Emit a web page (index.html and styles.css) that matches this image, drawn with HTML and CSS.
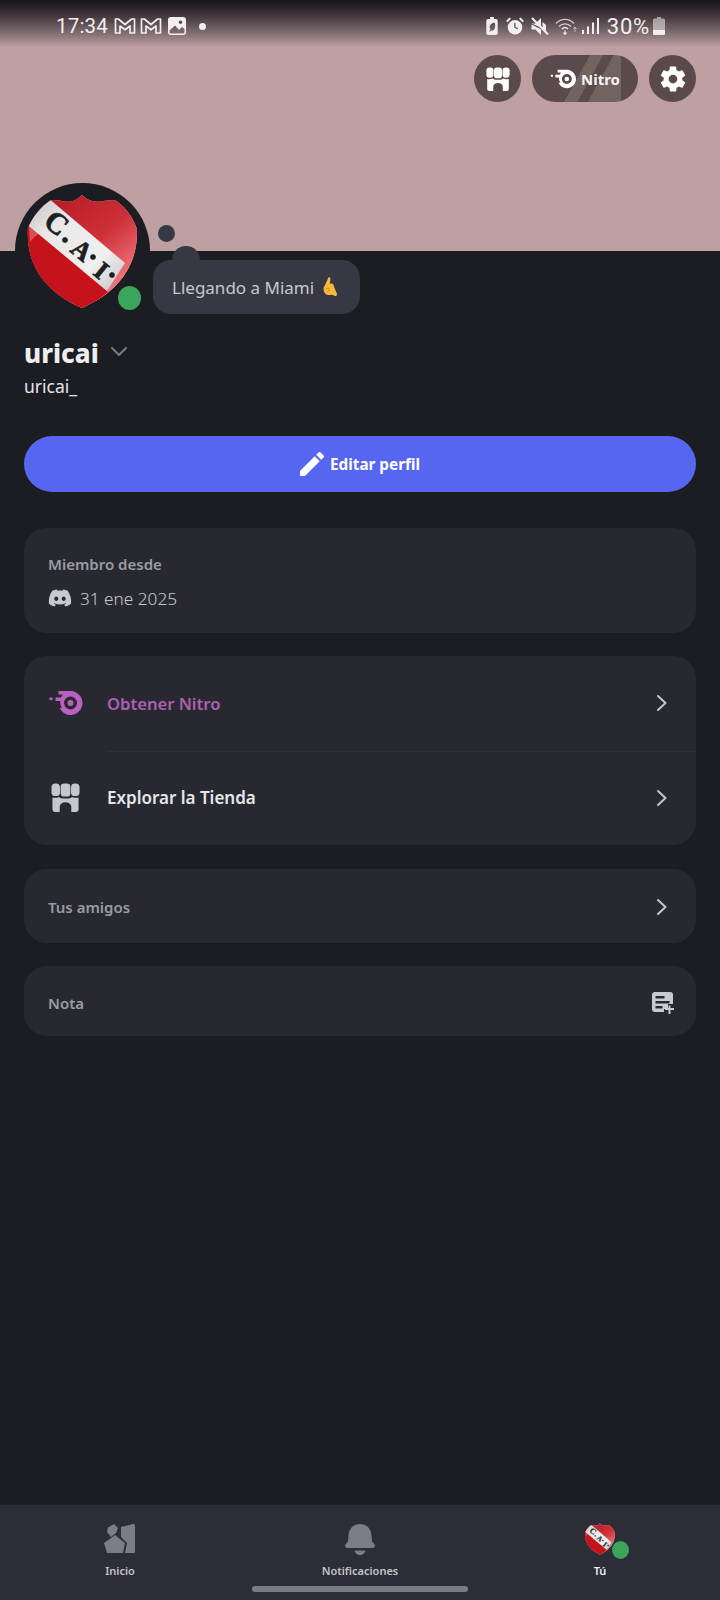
FILE: index.html
```html
<!DOCTYPE html>
<html lang="es">
<head>
<meta charset="utf-8">
<title>uricai</title>
<link rel="stylesheet" href="styles.css">
</head>
<body>
<svg class="sprite" width="0" height="0" aria-hidden="true">
  <defs>
    <linearGradient id="redTop" x1="0.1" y1="0" x2="0.9" y2="1">
      <stop offset="0" stop-color="#b01720"/><stop offset="0.5" stop-color="#cf2f38"/><stop offset="0.8" stop-color="#ec7076"/><stop offset="1" stop-color="#f58a90"/>
    </linearGradient>
    <linearGradient id="band" x1="0" y1="0" x2="1" y2="1">
      <stop offset="0" stop-color="#bcbcbc"/><stop offset="0.3" stop-color="#e8e8e8"/><stop offset="0.7" stop-color="#f0f0f0"/><stop offset="1" stop-color="#c2c2c2"/>
    </linearGradient>
    <clipPath id="shieldClip">
      <path d="M82 195c3 3 6 5 10 6 7 2 14-1 21-1 2 0 4 1 6 3 8 6 14 15 18 26 1 30-12 60-55 79-43-19-56-49-54-80 5-11 11-19 19-25 2-2 4-3 6-3 7 0 14 3 20 1 3-1 6-3 9-6z"/>
    </clipPath>
    <symbol id="shield" viewBox="26 193 113 117">
      <path d="M82 195c3 3 6 5 10 6 7 2 14-1 21-1 2 0 4 1 6 3 8 6 14 15 18 26 1 30-12 60-55 79-43-19-56-49-54-80 5-11 11-19 19-25 2-2 4-3 6-3 7 0 14 3 20 1 3-1 6-3 9-6z" fill="#e9b9b9"/>
      <g clip-path="url(#shieldClip)">
        <rect x="26" y="193" width="113" height="117" fill="url(#redTop)"/>
        <path d="M26 224 108 292 82 312 30 312 20 240z" fill="#c6131b"/>
        <path d="M29 226 47 219 58 228C44 230 36 234 30 242z" fill="#dc4d55"/>
        <path d="M47 197 125 263 107 291 24 222z" fill="url(#band)"/>
        <g class="shield-text">
          <text x="42" y="224" class="big" transform="rotate(39 42 224)">C</text>
          <circle cx="65" cy="240" r="2.500"/>
          <text x="69" y="251" class="mid" transform="rotate(39 69 251)">A</text>
          <circle cx="93" cy="257" r="2.500"/>
          <text x="92" y="274" class="mid" transform="rotate(39 92 274)">I</text>
          <circle cx="112" cy="275" r="2.500"/>
        </g>
      </g>
    </symbol>
    <symbol id="store" viewBox="0 0 30 30">
      <rect x="0.500" y="0.500" width="8.800" height="13" rx="4"/>
      <rect x="10" y="0.500" width="10" height="13.500" rx="3.500"/>
      <rect x="20.700" y="0.500" width="8.800" height="13" rx="4"/>
      <path d="M1.500 15c2.200 .6 4.800 .4 6.800-.6 1 1 2.800 1.600 6.700 1.600s5.700-.6 6.700-1.600c2 1 4.600 1.200 6.800 .6V27.500a2.500 2.500 0 0 1-2.500 2.500H21V24.500a6 4.500 0 0 0-12 0V30H4A2.500 2.500 0 0 1 1.500 27.500z"/>
    </symbol>
    <symbol id="nitro" viewBox="0 0 34 26">
      <path fill-rule="evenodd" d="M10 1H22A12 12 0 1 1 13.500 21.500L11 18H13.500Q11.500 14.500 11.500 11H7V7.500H12.500Q13.200 6 14.500 4.500H10ZM22 6.500a6.500 6.500 0 1 0 0 13 6.500 6.500 0 0 0 0-13ZM22 10a3 3 0 1 1 0 6 3 3 0 0 1 0-6Z"/>
      <rect x="1" y="7.500" width="3" height="2.600"/>
    </symbol>
    <symbol id="chev" viewBox="0 0 12 18">
      <path d="M2 2l7.500 7L2 16" fill="none" stroke="currentColor" stroke-width="2" stroke-linecap="round" stroke-linejoin="round"/>
    </symbol>
    <symbol id="gmail" viewBox="0 0 22 18">
      <path d="M1.500 2v14h4.500V9l5 3.800L16 9v7h4.500V2h-2.800L11 7.500 4.300 2z" fill="none" stroke="currentColor" stroke-width="1.700" stroke-linejoin="round"/>
    </symbol>
  </defs>
</svg>

<div class="page">
  <header class="banner">
    <div class="statusbar">
      <div class="status-left">
        <span class="clock">17:34</span>
        <svg class="si si-m"><use href="#gmail"/></svg>
        <svg class="si si-m"><use href="#gmail"/></svg>
        <svg class="si si-img" viewBox="0 0 18 18"><path d="M3 0h12a3 3 0 0 1 3 3v12a3 3 0 0 1-3 3H3a3 3 0 0 1-3-3V3a3 3 0 0 1 3-3zm9.500 3.500a1.800 1.800 0 1 0 0 3.600 1.800 1.800 0 0 0 0-3.600zM1.500 13.500V15A1.500 1.500 0 0 0 3 16.500h12a1.500 1.500 0 0 0 1.500-1.500v-3l-2.500-2-3 3-4-4.500z" fill-rule="evenodd"/></svg>
        <span class="notif-dot"></span>
      </div>
      <div class="status-right">
        <svg class="si si-batt" viewBox="0 0 12 19"><path d="M4 0h4v2h2a2 2 0 0 1 2 2v13a2 2 0 0 1-2 2H2a2 2 0 0 1-2-2V4a2 2 0 0 1 2-2h2zM9 6C6 6 3.500 8 3.500 11c0 1 .3 1.800.8 2.500L3 15l.8.700 1.300-1.500c3 1 5-2 3.900-8.200z" fill-rule="evenodd"/></svg>
        <svg class="si si-alarm" viewBox="0 0 18 18"><path d="M9 3a7.300 7.300 0 1 1 0 14.600A7.300 7.300 0 0 1 9 3zM8.200 6v4.500l3.300 2 .8-1-2.800-1.700V6zM0 4l3.500-3.500 1.500 1.300L1.500 5.300zM18 4l-3.500-3.500L13 1.800l3.500 3.500z" fill-rule="evenodd"/></svg>
        <svg class="si si-mute" viewBox="0 0 18 18"><path d="M.5 6.500h4L10 1v9.500zM.5 7.500v5h3.800L10 18v-5.500zM11.500 5v6.500l3.500 3.500V8z"/><path d="M1 1l16 16.500" stroke="currentColor" stroke-width="2" fill="none"/></svg>
        <svg class="si si-wifi" viewBox="0 0 23 18" fill="none" stroke="currentColor"><path d="M1 6.500C6 1 14 1 19 6.500" stroke-width="1.200" opacity=".8"/><path d="M4 9.500c3.500-3.500 8.500-3.500 12 0" stroke-width="1.200" opacity=".8"/><path d="M7 12c2-2 4-2 6 0" stroke-width="1.200"/><path d="M10 13.500v4M8.500 15.500l1.500 2 1.500-2" stroke-width="1.100"/><path d="M20 15v-5M18.500 12l1.500-2 1.500 2" stroke-width="1" opacity=".6"/></svg>
        <svg class="si si-signal" viewBox="0 0 17 17"><rect x="0" y="12" width="2" height="4"/><rect x="5" y="8.500" width="2" height="7.500"/><rect x="10" y="4.500" width="2" height="11.500"/><rect x="15" y="0" width="2" height="16"/></svg>
        <span class="pct">30%</span>
        <svg class="si si-batt2" viewBox="0 0 12 18"><path d="M4 0h4v1.500h2.500A1.500 1.500 0 0 1 12 3v13.500a1.500 1.500 0 0 1-1.500 1.500h-9A1.500 1.500 0 0 1 0 16.500V3a1.500 1.500 0 0 1 1.500-1.500H4z" opacity=".55"/><path d="M0 13h12v3.500a1.500 1.500 0 0 1-1.500 1.500h-9A1.500 1.500 0 0 1 0 16.500z"/></svg>
      </div>
    </div>
    <div class="actions">
      <button class="round-btn"><svg class="ic-store"><use href="#store"/></svg></button>
      <button class="pill-btn"><svg class="ic-nitro"><use href="#nitro"/></svg><span>Nitro</span></button>
      <button class="round-btn"><svg class="ic-gear" viewBox="0 0 24 24"><path d="M12,15.500A3.500,3.500 0 0,1 8.500,12A3.500,3.500 0 0,1 12,8.500A3.500,3.500 0 0,1 15.500,12A3.500,3.500 0 0,1 12,15.500M19.430,12.970C19.470,12.650 19.500,12.330 19.500,12C19.500,11.670 19.470,11.340 19.430,11L21.540,9.370C21.730,9.220 21.780,8.950 21.660,8.730L19.660,5.270C19.540,5.050 19.270,4.960 19.050,5.050L16.560,6.050C16.040,5.660 15.500,5.320 14.870,5.070L14.500,2.420C14.460,2.180 14.250,2 14,2H10C9.750,2 9.540,2.180 9.500,2.420L9.130,5.070C8.500,5.320 7.960,5.660 7.440,6.050L4.950,5.050C4.730,4.960 4.460,5.050 4.340,5.270L2.340,8.730C2.210,8.950 2.270,9.220 2.460,9.370L4.570,11C4.530,11.340 4.500,11.670 4.500,12C4.500,12.330 4.530,12.650 4.570,12.970L2.460,14.630C2.270,14.780 2.210,15.050 2.340,15.270L4.340,18.730C4.460,18.950 4.730,19.030 4.950,18.950L7.440,17.940C7.960,18.340 8.500,18.680 9.130,18.930L9.500,21.580C9.540,21.820 9.750,22 10,22H14C14.250,22 14.460,21.820 14.500,21.580L14.870,18.930C15.500,18.670 16.040,18.340 16.560,17.940L19.050,18.950C19.270,19.030 19.540,18.950 19.660,18.730L21.660,15.270C21.780,15.050 21.730,14.780 21.540,14.630L19.430,12.970Z"/></svg></button>
    </div>
    <div class="avatar">
      <svg class="avatar-shield"><use href="#shield"/></svg>
      <span class="online online-lg"></span>
    </div>
    <span class="thought-dot"></span>
    <div class="bubble">
      <span class="bubble-bump"></span>
      <span class="bubble-text">Llegando a Miami</span>
      <svg class="emoji" viewBox="0 0 18 22"><path d="M8 .8c1.500-.6 2.300.7 2 2L9.300 7.500c1.700-.4 3.300 0 4 1.500l.7 2.500 2.800 6.500c.6 1.500-.4 3.200-2 2.600L11.500 19c-3 1.300-6.500.3-8-2.500C2.300 14 2.300 11.500 4 9.500z" fill="#f7b93c"/><path d="M9 12.500c-1.500-.5-3 0-3.500 1M9.500 15c-1.300-.3-2.500 0-3 .8" stroke="#c77d12" stroke-width="1" fill="none"/></svg>
    </div>
  </header>

  <main class="content">
    <div class="name-row">
      <h1 class="name">uricai</h1>
      <svg class="name-chev" viewBox="0 0 18 12"><path d="M2 2l7 7 7-7" fill="none" stroke="currentColor" stroke-width="1.800" stroke-linecap="round" stroke-linejoin="round"/></svg>
    </div>
    <p class="username">uricai_</p>

    <button class="edit-btn">
      <svg class="ic-pencil" viewBox="3 3 18 18"><path d="M20.710,7.040C21.100,6.650 21.100,6 20.710,5.630L18.370,3.290C18,2.900 17.350,2.900 16.960,3.290L15.120,5.120L18.870,8.870M3,17.250V21H6.750L17.810,9.930L14.060,6.180L3,17.250Z"/></svg>
      <span>Editar perfil</span>
    </button>

    <section class="card member">
      <div class="label">Miembro desde</div>
      <div class="since">
        <svg class="ic-discord" viewBox="0 0 24 24"><path d="M19.730 4.870a18.200 18.200 0 0 0-4.600-1.440c-.21.400-.40.800-.58 1.210-1.690-.25-3.400-.25-5.100 0-.18-.41-.37-.82-.59-1.200-1.600.27-3.140.75-4.600 1.430A19.040 19.040 0 0 0 .96 17.700a18.430 18.430 0 0 0 5.630 2.870c.46-.62.86-1.280 1.200-1.980-.65-.25-1.290-.55-1.900-.92.17-.12.32-.24.47-.37 3.580 1.700 7.700 1.700 11.280 0l.46.370c-.6.360-1.250.67-1.900.92.350.7.750 1.350 1.200 1.980 2.030-.63 3.940-1.600 5.640-2.870.47-4.870-.78-9.090-3.300-12.830ZM8.300 15.120c-1.100 0-2-1.020-2-2.270 0-1.240.88-2.260 2-2.260s2.020 1.020 2 2.260c0 1.250-.89 2.270-2 2.270Zm7.400 0c-1.100 0-2-1.020-2-2.270 0-1.240.88-2.260 2-2.260s2.020 1.020 2 2.260c0 1.250-.88 2.270-2 2.270Z"/></svg>
        <span>31 ene 2025</span>
      </div>
    </section>

    <section class="card list">
      <div class="row">
        <svg class="row-icon row-nitro"><use href="#nitro"/></svg>
        <span class="row-text nitro-text">Obtener Nitro</span>
        <svg class="chev"><use href="#chev"/></svg>
      </div>
      <div class="row row-divided">
        <svg class="row-icon row-store"><use href="#store"/></svg>
        <span class="row-text">Explorar la Tienda</span>
        <svg class="chev"><use href="#chev"/></svg>
      </div>
    </section>

    <section class="card simple friends">
      <span class="label">Tus amigos</span>
      <svg class="chev"><use href="#chev"/></svg>
    </section>

    <section class="card simple note">
      <span class="label">Nota</span>
      <svg class="ic-note" viewBox="0 0 22 22"><path fill-rule="evenodd" d="M3 0h15a3 3 0 0 1 3 3v9h-5v5h-4v3H3a3 3 0 0 1-3-3V3a3 3 0 0 1 3-3zM3.500 4v2.500h9V4zM3.500 9v2.500h14V9zM3.500 14v2.500h7V14z"/><path d="M16.500 13.500h2V16H22v2h-3.500v4h-2v-4H13v-2h3.500z"/></svg>
    </section>
  </main>

  <nav class="tabbar">
    <div class="tab">
      <svg class="tab-icon" viewBox="0 0 32 32"><path d="M17 4 29 1c1-.2 2 .5 2 1.500V29a1 1 0 0 1-1 1h-9l2-10-6-6z"/><path d="M10 1l4 4-2 5-5 4-4-5 1-4.500z"/><path d="M11 12l10 8-2 10H3L0 20z"/></svg>
      <span class="tab-label">Inicio</span>
    </div>
    <div class="tab">
      <svg class="tab-icon" viewBox="0 0 32 32"><path d="M16 1c6.500 0 11 4.500 11.500 11l.5 6c.1 1.500 3 3 3 5 0 1-1 1.800-2 2H3c-1-.2-2-1-2-2 0-2 2.900-3.500 3-5l.5-6C5 5.500 9.500 1 16 1zM10.500 27.500h11C21 30 18.800 32 16 32s-5-2-5.500-4.500z"/></svg>
      <span class="tab-label">Notificaciones</span>
    </div>
    <div class="tab">
      <div class="tab-avatar">
        <svg class="tab-shield"><use href="#shield"/></svg>
        <span class="online online-sm"></span>
      </div>
      <span class="tab-label tab-label-active">Tú</span>
    </div>
    <span class="home-bar"></span>
  </nav>
</div>
</body>
</html>
```

FILE: styles.css
```css
* { box-sizing: border-box; }
html, body { margin: 0; padding: 0; }
body { background: #1c1d23; font-family: "Noto Sans", "Open Sans", sans-serif; color: #f0f1f3; }
.sprite { position: absolute; }
.page { width: 720px; height: 1600px; display: flex; flex-direction: column; overflow: hidden; }

.banner {
  position: relative; height: 251px; flex: none;
  background: linear-gradient(180deg, #15141a 0, #3c3238 14px, #7f6d70 33px, #be9fa2 47px, #be9fa2 100%);
}
.statusbar { height: 55px; padding: 0 55px 0 56px; display: flex; justify-content: space-between; align-items: flex-start; color: #f1eef0; fill: #f1eef0; }
.status-left, .status-right { height: 52px; display: flex; align-items: center; }
.clock { font-family: Roboto, sans-serif; font-size: 20.500px; letter-spacing: .2px; }
.pct { font-family: Roboto, sans-serif; font-size: 22px; letter-spacing: .8px; }
.si { display: block; fill: currentColor; flex: none; }
.si-m { width: 22px; height: 18px; }
.clock + .si-m { margin-left: 6px; }
.si-m + .si-m { margin-left: 4px; }
.si-img { width: 18px; height: 18px; margin-left: 6px; }
.notif-dot { width: 7px; height: 7px; border-radius: 50%; background: #f1eef0; margin-left: 13px; }
.si-batt { width: 12px; height: 18px; }
.si-alarm { width: 18px; height: 18px; margin-left: 8px; }
.si-mute { width: 18px; height: 18px; margin-left: 7px; }
.si-wifi { width: 23px; height: 18px; margin-left: 6px; fill: none; }
.si-signal { width: 17px; height: 17px; margin-left: 4px; }
.pct { margin-left: 8px; }
.si-batt2 { width: 12px; height: 18px; margin-left: 3px; }

.actions { display: flex; justify-content: flex-end; gap: 11px; padding-right: 24px; }
button { border: 0; padding: 0; font: inherit; color: inherit; }
.round-btn { width: 47px; height: 47px; border-radius: 50%; background: #5a4a4c; display: flex; align-items: center; justify-content: center; fill: #fff; }
.ic-store { width: 24px; height: 24px; }
.ic-gear { width: 30px; height: 30px; }
.pill-btn {
  width: 106px; height: 47px; border-radius: 24px; display: flex; align-items: center; justify-content: center; gap: 5px; fill: #fff;
  font-size: 15px; font-weight: 700; color: #f5f3f3;
  background:
    linear-gradient(90deg, transparent 84%, #5a4a4c 84%),
    linear-gradient(119deg, #5a4a4c 0 44%, #72635f 44% 54%, #5a4a4c 54% 62%, #72635f 62% 100%);
}
.ic-nitro { width: 26px; height: 20px; }

.avatar { position: absolute; left: 15px; top: 183px; width: 135px; height: 135px; border-radius: 50%; background: #1c1d23; }
.avatar-shield { position: absolute; left: 11px; top: 10px; width: 113px; height: 117px; }
.online { position: absolute; border-radius: 50%; background: #3ba55c; }
.online-lg { width: 23px; height: 24px; left: 103px; top: 103px; }
.thought-dot { position: absolute; left: 158px; top: 225px; width: 17px; height: 17px; border-radius: 50%; background: #363843; }
.bubble {
  position: absolute; left: 153px; top: 260px; width: 207px; height: 54px; border-radius: 18px; background: #363843;
  display: flex; align-items: center; padding-left: 19px; gap: 7px; color: #c6c8ce;
  font-size: 17px;
}
.bubble-bump { position: absolute; left: 19px; top: -14px; width: 28px; height: 28px; border-radius: 50%; background: #363843; }
.bubble-text { position: relative; }
.emoji { width: 17px; height: 22px; flex: none; }
.shield-text { fill: #1f1f1f; stroke: #1f1f1f; stroke-width: .7px; font-family: "Liberation Serif", serif; font-weight: 700; }
.shield-text .big { font-size: 30px; }
.shield-text .mid { font-size: 26px; }

.content { flex: 1; padding: 83px 24px 0; display: flex; flex-direction: column; }
.name-row { display: flex; align-items: center; height: 38px; }
.name { margin: 0; font-size: 26px; line-height: 38px; font-weight: 800; color: #eceef0; }
.name-chev { width: 18px; height: 12px; margin-left: 11px; color: #7d7f88; margin-top: -2px; }
.username { margin: 0; font-size: 17.500px; line-height: 26px; margin-top: 1px; color: #e3e4e8; font-weight: 400; }
.edit-btn {
  margin-top: 37px; height: 56px; border-radius: 28px; background: #5766f0; display: flex; align-items: center; justify-content: center; gap: 6px; color: #fff; fill: #fff;
  font-size: 15.300px; font-weight: 700;
}
.ic-pencil { width: 24px; height: 24px; margin-top: -1px; }
.card { background: #282930; border-radius: 23px; }
.member { margin-top: 36px; height: 105px; padding: 24px 24px 0; }
.label { font-size: 15px; line-height: 24px; font-weight: 600; color: #9a9ba3; }
.since { display: flex; align-items: center; margin-top: 10px; font-size: 17.200px; line-height: 26px; color: #c8c9cf; font-weight: 300; fill: #c8c9cf; }
.ic-discord { width: 24px; height: 24px; margin-right: 8px; margin-top: -3px; }
.list { margin-top: 23px; height: 189px; display: flex; flex-direction: column; }
.row { flex: 1; position: relative; display: flex; align-items: center; padding: 0 28px 0 24px; }
.row-divided::before { content: ""; position: absolute; left: 83px; right: 0; top: 0; height: 1px; background: #2f3038; }
.row-icon { flex: none; margin-right: 24px; }
.row-nitro { width: 35px; height: 26px; fill: #bb60c0; }
.row-store { width: 35px; height: 29px; fill: #c6c7cc; }
.row-text { flex: 1; font-size: 17px; font-weight: 600; color: #e5e6ea; }
.nitro-text { color: #ae5fb4; font-size: 16.600px; }
.chev { width: 12px; height: 18px; flex: none; color: #c5c6cb; }
.simple { display: flex; align-items: center; justify-content: space-between; padding: 0 28px 0 24px; }
.friends { margin-top: 24px; height: 74px; padding-top: 2px; }
.note { margin-top: 23px; height: 70px; padding: 3px 22px 0 24px; }
.ic-note { width: 22px; height: 22px; fill: #c9cace; }

.tabbar { position: relative; flex: none; height: 95px; background: #2c2d36; display: flex; padding-top: 18px; }
.tab { flex: 1; display: flex; flex-direction: column; align-items: center; }
.tab-icon { width: 32px; height: 32px; fill: #7c7d87; }
.tab-label { margin-top: 8px; font-size: 11px; line-height: 16px; font-weight: 600; color: #c4c5cb; }
.tab-label-active { color: #eceef0; }
.tab-avatar { position: relative; width: 32px; height: 32px; }
.tab-shield { display: block; width: 32px; height: 32px; }
.online-sm { width: 17px; height: 18px; left: 28px; top: 18px; }
.home-bar { position: absolute; left: 252px; top: 81px; width: 216px; height: 6px; border-radius: 3px; background: #7a7b81; }
```
